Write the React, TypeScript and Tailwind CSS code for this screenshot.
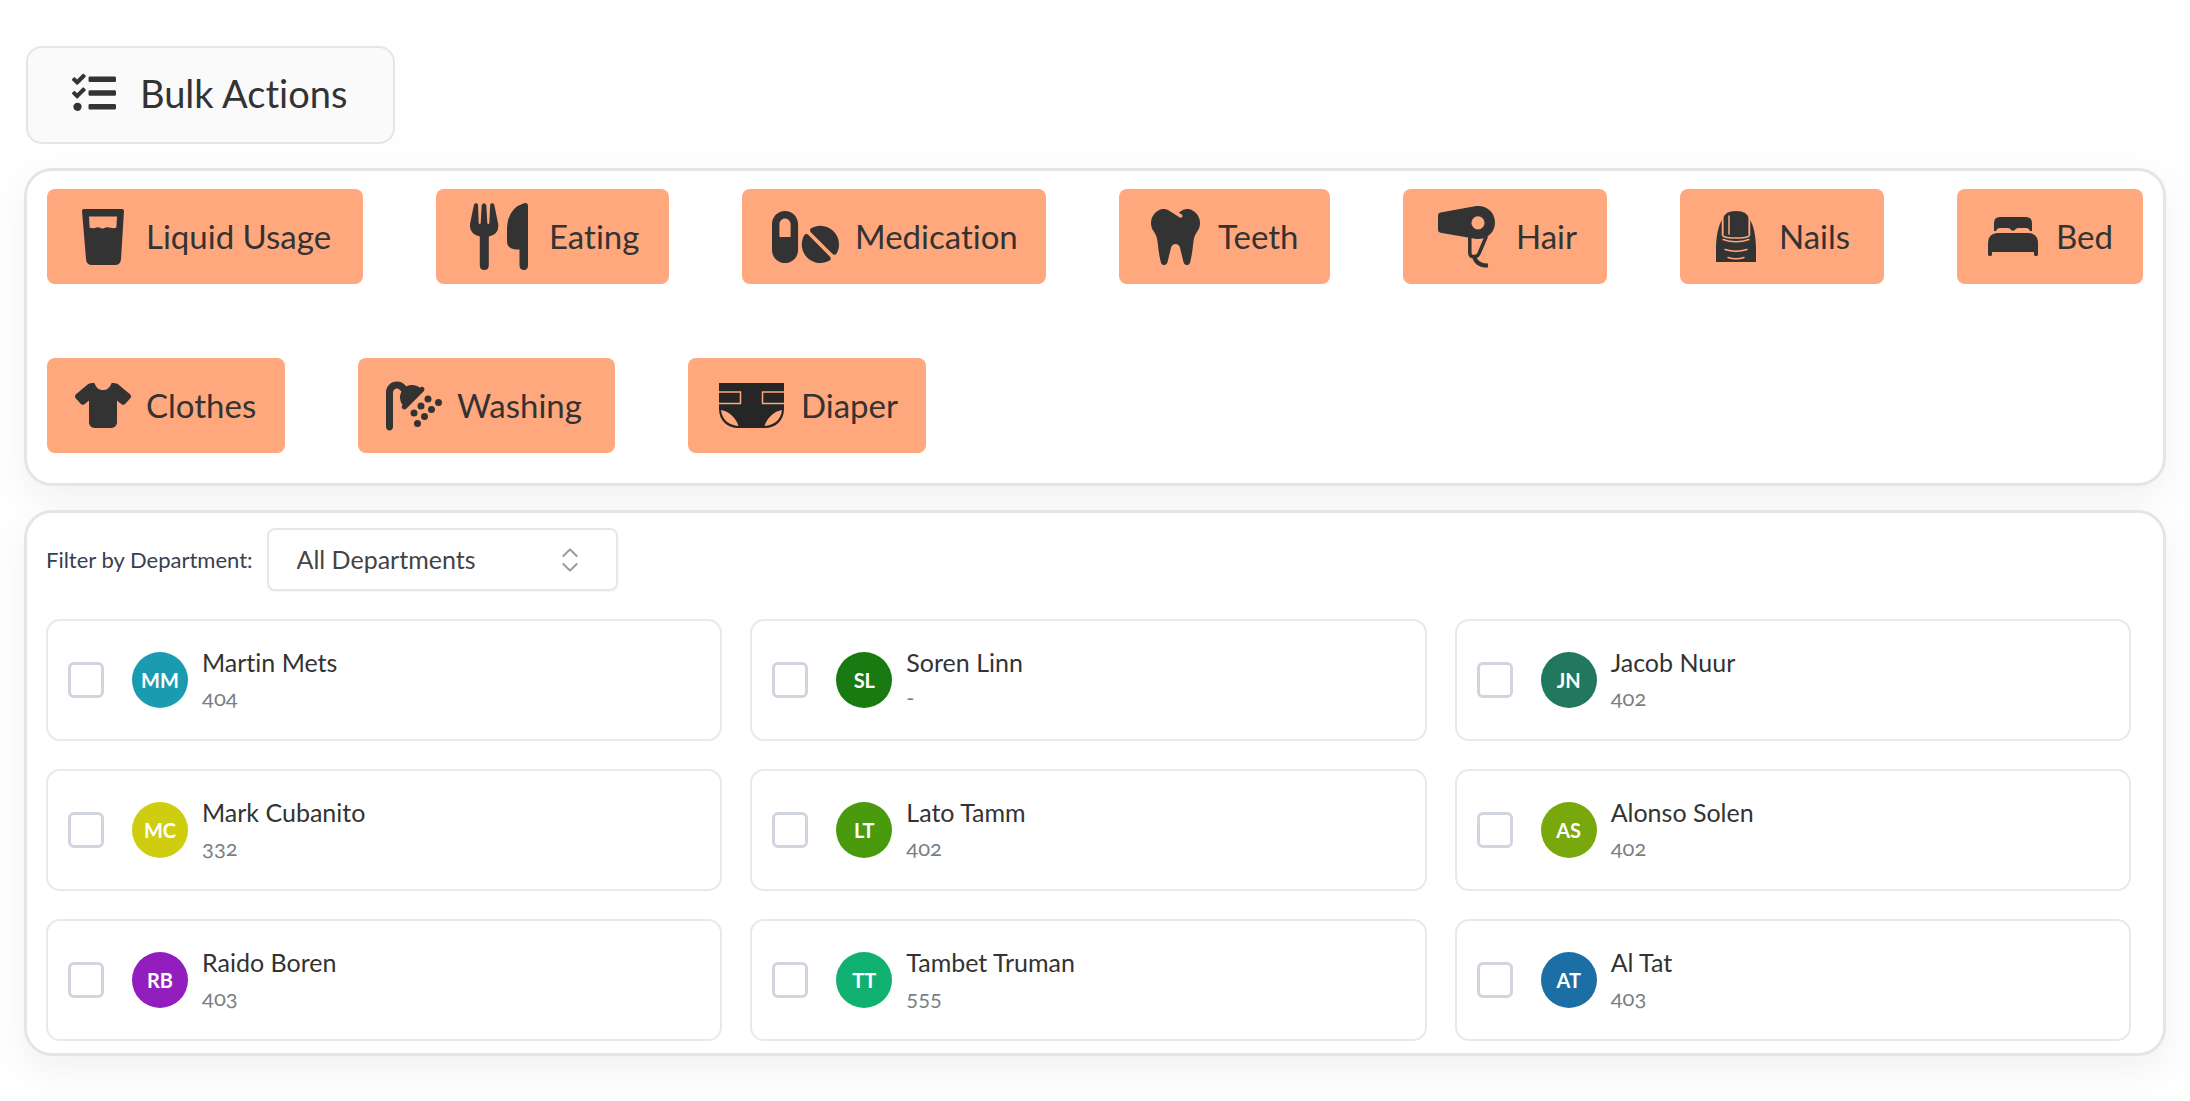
import { useState } from 'react'
import type { ReactNode } from 'react'
import { ChevronsUpDown } from 'lucide-react'
import { FaTasks, FaTooth } from 'react-icons/fa'
import { FaPills, FaShirt, FaShower } from 'react-icons/fa6'

const GlassIcon = () => (
  <svg width="42" height="56" viewBox="0 0 42 56" fill="currentColor" aria-hidden="true">
    <path
      fillRule="evenodd"
      d="M2 0H40Q42 0 42 2L39 50Q38.500 56 33 56H10Q4.500 56 4 50L0 2Q0 0 2 0ZM7 7.500L7.600 18.500Q10 20 13.500 18.800Q16 17.600 18.500 19Q21 20.200 23.500 18.600Q26 17.600 28.500 18.800Q32 19.800 34.400 18.500L35 7.500Z"
    />
  </svg>
)

const CutleryIcon = () => (
  <svg width="58" height="67" viewBox="0 0 58 67" fill="currentColor" aria-hidden="true">
    <path d="M4 1.500Q6 -1 8 1.500L8.700 20Q9.700 22.500 10.700 20L11.700 2Q14 -1.500 16.300 2L17.300 20Q18.300 22.500 19.300 20L20.200 1.500Q22 -1 24.200 1.500L28 20Q30 31 18.800 33.500V62.500Q18.500 67 14.300 67Q10 67 9.800 62.500V33.500Q-1.500 31 .2 20Z" />
    <path d="M58 3V62.500Q57.800 67 53.800 67Q49.800 67 49.500 62.500V46.500H46Q37 46 37 38V26Q37.500 5 54 .2Q58 -.5 58 3Z" />
  </svg>
)

const DryerIcon = () => (
  <svg width="57" height="62" viewBox="0 0 57 62" fill="none" stroke="currentColor" aria-hidden="true">
    <path
      fill="currentColor"
      stroke="none"
      fillRule="evenodd"
      d="M2.500 6.500L37 .3C48 -1.500 57 6 57 16.500C57 27 48 34.500 37 32.800L2.500 26.800Q0 26 0 24V9Q0 7 2.500 6.500ZM40 10.200A6.600 6.600 0 1 0 40 23.400A6.600 6.600 0 1 0 40 10.200Z"
    />
    <path d="M31.800 31V47Q32 50.500 35 50.500H37Q39.500 50.500 41 47.500L48.500 30" strokeWidth="3.500" />
    <path d="M36 50Q38 59.800 50 59.500" strokeWidth="4" />
  </svg>
)

const NailIcon = () => (
  <svg width="40" height="51" viewBox="0 0 40 51" fill="currentColor" aria-hidden="true">
    <path d="M0 51V38C0 25 2.500 14 6 9V23H34V9C37.500 14 40 25 40 38V51Z" />
    <path d="M7.500 23V8Q8 0 20 0Q32 0 32.500 8V23Q32 25 29 25.300Q20 26.500 11 25.300Q8 25 7.500 23Z" />
    <g fill="none" stroke="#ffa87d" strokeWidth="1.500" strokeLinecap="round">
      <path d="M6.500 10V23.500Q6.500 25.500 10 26.200Q20 28 30 26.200Q33.500 25.500 33.500 23.500V10" />
      <path d="M7 28.500Q20 33 33 28.500" />
      <path d="M13 5V23" />
      <path d="M9 38.500Q20 42 31 38.500" />
      <path d="M12 46.500Q20 49 28 46.500" />
    </g>
  </svg>
)

const BedIcon = () => (
  <svg width="50" height="39" viewBox="0 0 50 39" fill="currentColor" aria-hidden="true">
    <path d="M6 14V6Q6 0 12 0H38Q44 0 44 6V14H42Q41 11 38 11H30Q27.500 11 26.500 13.500H23.500Q22.500 11 20 11H12Q9 11 8 14Z" />
    <path d="M9 16H41Q50 17 50 26V37.500Q50 39 48 39Q46 39 46 37.500V35H4V37.500Q4 39 2 39Q0 39 0 37.500V26Q0 17 9 16Z" />
  </svg>
)

const DiaperIcon = () => (
  <svg width="65" height="45" viewBox="0 0 65 45" aria-hidden="true">
    <path d="M0 0H65V26C65 38 56 45 46 45H19C9 45 0 38 0 26Z" fill="#262626" />
    <g fill="none" stroke="#ffa87d" strokeWidth="1.500">
      <path d="M0 9H21.500V20.500H0" />
      <path d="M65 9H43.500V20.500H65" />
    </g>
    <path d="M2 27C10 28 17 35 19.500 43C10 42 3 37 2 27Z" fill="#ffa87d" />
    <path d="M63 27C55 28 48 35 45.500 43C55 42 62 37 63 27Z" fill="#ffa87d" />
  </svg>
)

interface Action {
  label: string
  icon: ReactNode
  width: string
  iconBox: string
}

const actions: Action[] = [
  { label: 'Liquid Usage', icon: <GlassIcon />, width: 'w-[316px]', iconBox: 'w-14' },
  { label: 'Eating', icon: <CutleryIcon />, width: 'w-[233px]', iconBox: 'w-[70px]' },
  { label: 'Medication', icon: <FaPills className="h-[60px] w-[67px]" />, width: 'w-[304px]', iconBox: 'w-[70px]' },
  { label: 'Teeth', icon: <FaTooth className="h-14 w-[49px]" />, width: 'w-[211px]', iconBox: 'w-14' },
  { label: 'Hair', icon: <DryerIcon />, width: 'w-[204px]', iconBox: 'w-[70px]' },
  { label: 'Nails', icon: <NailIcon />, width: 'w-[204px]', iconBox: 'w-14' },
  { label: 'Bed', icon: <BedIcon />, width: 'w-[186px]', iconBox: 'w-14' },
  { label: 'Clothes', icon: <FaShirt className="h-[45px] w-14" />, width: 'w-[238px]', iconBox: 'w-14' },
  { label: 'Washing', icon: <FaShower className="size-14" />, width: 'w-[257px]', iconBox: 'w-14' },
  { label: 'Diaper', icon: <DiaperIcon />, width: 'w-[238px]', iconBox: 'w-[70px]' },
]

const residents = [
  { name: 'Martin Mets', initials: 'MM', room: '404', color: 'bg-[#1b9bb0]' },
  { name: 'Soren Linn', initials: 'SL', room: '-', color: 'bg-[#1a7a12]' },
  { name: 'Jacob Nuur', initials: 'JN', room: '402', color: 'bg-[#22785f]' },
  { name: 'Mark Cubanito', initials: 'MC', room: '332', color: 'bg-[#cfcd10]' },
  { name: 'Lato Tamm', initials: 'LT', room: '402', color: 'bg-[#4a9a0e]' },
  { name: 'Alonso Solen', initials: 'AS', room: '402', color: 'bg-[#78a80c]' },
  { name: 'Raido Boren', initials: 'RB', room: '403', color: 'bg-[#931ebe]' },
  { name: 'Tambet Truman', initials: 'TT', room: '555', color: 'bg-[#10b070]' },
  { name: 'Al Tat', initials: 'AT', room: '403', color: 'bg-[#1b6fa5]' },
]

const panel = 'rounded-[28px] border-[3px] border-[#e5e5e5] bg-white shadow-[0_14px_34px_rgba(0,0,0,0.05)]'

const ActionButton = ({ label, icon, width, iconBox }: Action) => (
  <button
    type="button"
    className={`${width} flex h-[95px] shrink-0 items-center gap-[15px] rounded-lg bg-[#ffa87d] pl-7 text-[33px] whitespace-nowrap`}
  >
    <span className={`${iconBox} flex shrink-0 justify-center`}>{icon}</span>
    {label}
  </button>
)

const ResidentCard = ({ name, initials, room, color }: (typeof residents)[number]) => {
  const [checked, setChecked] = useState(false)

  return (
    <label className="flex h-[122px] items-center rounded-[14px] border-2 border-[#e9e9e9] pl-5">
      <input
        type="checkbox"
        checked={checked}
        onChange={(e) => setChecked(e.target.checked)}
        className="size-9 shrink-0 appearance-none rounded-md border-[3px] border-[#d1d5e0] bg-white checked:bg-[#ffa87d]"
      />
      <span
        className={`${color} ml-7 flex size-14 shrink-0 items-center justify-center rounded-full text-xl font-bold text-white`}
      >
        {initials}
      </span>
      <span className="ml-3.5 flex flex-col">
        <span className="text-[25px] leading-9">{name}</span>
        <span className="text-[22px] leading-9 text-[#7a7f85] oldstyle-nums">{room}</span>
      </span>
    </label>
  )
}

export default function App() {
  return (
    <main className="flex min-h-screen flex-col gap-6 bg-[#fefefe] px-6 pt-[46px] pb-10 font-['Lato','Noto_Sans',sans-serif] text-[#333] [font-variant-ligatures:no-common-ligatures]">
      <button
        type="button"
        className="ml-0.5 flex h-[98px] w-[369px] items-center gap-6 self-start rounded-2xl border-2 border-[#e5e5e5] bg-[#fafafa] pb-1 pl-11 text-[38px]"
      >
        <FaTasks className="size-11" />
        Bulk Actions
      </button>

      <section aria-label="Actions" className={`${panel} flex flex-wrap gap-x-[73px] gap-y-[74px] pt-[18px] pr-[18px] pb-[30px] pl-5`}>
        {actions.map((a) => (
          <ActionButton key={a.label} {...a} />
        ))}
      </section>

      <section aria-label="Residents" className={`${panel} pt-[15px] pr-8 pb-3 pl-[19px]`}>
        <div className="flex items-center gap-3.5">
          <label htmlFor="department" className="text-[22px] text-[#374151]">
            Filter by Department:
          </label>
          <div className="relative w-[351px]">
            <select
              id="department"
              className="h-[63px] w-full appearance-none rounded-lg border-2 border-[#e5e7eb] bg-white px-7 text-[25px] text-[#444] shadow-xs"
            >
              <option>All Departments</option>
            </select>
            <ChevronsUpDown
              className="pointer-events-none absolute top-4 right-8 size-8 text-[#999]"
              strokeWidth={1.5}
            />
          </div>
        </div>
        <div className="mt-7 grid grid-cols-3 gap-7">
          {residents.map((r) => (
            <ResidentCard key={r.name} {...r} />
          ))}
        </div>
      </section>
    </main>
  )
}
